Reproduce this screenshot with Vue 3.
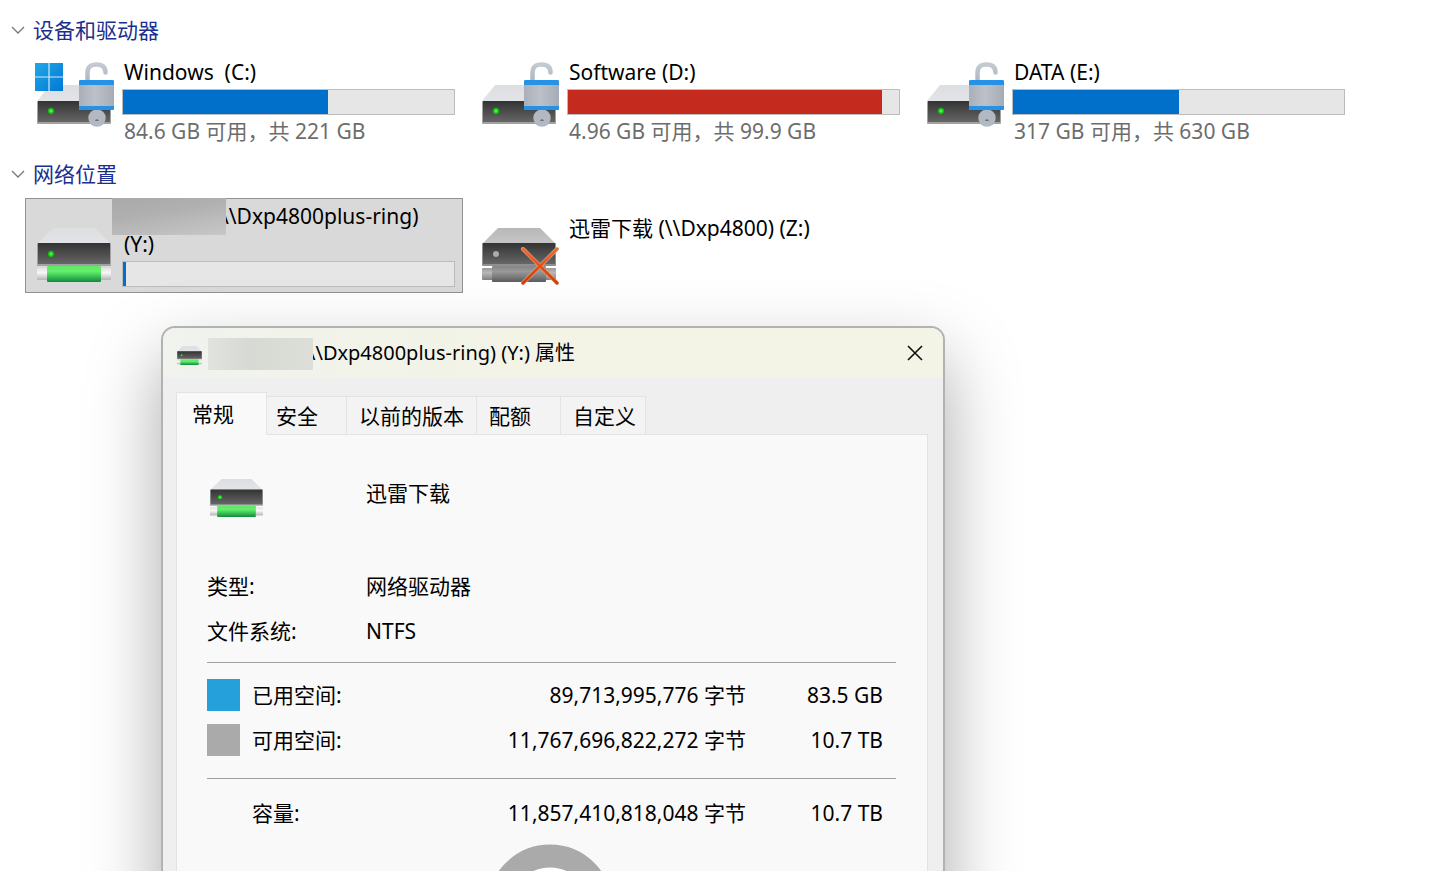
<template>
  <main class="explorer">
    <svg class="defs" width="0" height="0" aria-hidden="true">
      <defs>
        <linearGradient id="face" x1="0" y1="0" x2="0" y2="1">
          <stop offset="0" stop-color="#333" />
          <stop offset="1" stop-color="#666" />
        </linearGradient>
        <linearGradient id="lid" x1="0" y1="0" x2="0" y2="1">
          <stop offset="0" stop-color="#dcdee0" />
          <stop offset="1" stop-color="#e3e4e9" />
        </linearGradient>
        <linearGradient id="lidOff" x1="0" y1="0" x2="0" y2="1">
          <stop offset="0" stop-color="#b8b8b8" />
          <stop offset="1" stop-color="#c6c6c6" />
        </linearGradient>
        <linearGradient id="cable" x1="0" y1="0" x2="0" y2="1">
          <stop offset="0" stop-color="#5fe866" />
          <stop offset="0.35" stop-color="#62ee6c" />
          <stop offset="1" stop-color="#0f8a3c" />
        </linearGradient>
        <linearGradient id="plug" x1="0" y1="0" x2="0" y2="1">
          <stop offset="0" stop-color="#e2e2e2" />
          <stop offset="0.4" stop-color="#f8f8f8" />
          <stop offset="1" stop-color="#b4b4b4" />
        </linearGradient>
        <linearGradient id="cableOff" x1="0" y1="0" x2="0" y2="1">
          <stop offset="0" stop-color="#858585" />
          <stop offset="0.35" stop-color="#999" />
          <stop offset="1" stop-color="#5c5c5c" />
        </linearGradient>
        <linearGradient id="plugOff" x1="0" y1="0" x2="0" y2="1">
          <stop offset="0" stop-color="#999" />
          <stop offset="0.4" stop-color="#b8b8b8" />
          <stop offset="1" stop-color="#808080" />
        </linearGradient>
        <linearGradient id="win" x1="0" y1="0" x2="1" y2="1">
          <stop offset="0" stop-color="#22a7e8" />
          <stop offset="1" stop-color="#0078d4" />
        </linearGradient>
        <linearGradient id="steel" x1="0" y1="0" x2="1" y2="0">
          <stop offset="0" stop-color="#a9afb8" />
          <stop offset="0.45" stop-color="#bcc1c9" />
          <stop offset="1" stop-color="#a6acb5" />
        </linearGradient>
        <linearGradient id="shackle" x1="0" y1="0" x2="0" y2="1">
          <stop offset="0" stop-color="#c4cad2" />
          <stop offset="1" stop-color="#b0b6bf" />
        </linearGradient>
        <linearGradient id="cross" gradientUnits="userSpaceOnUse" x1="0" y1="47" x2="0" y2="81">
          <stop offset="0" stop-color="#f0682c" />
          <stop offset="1" stop-color="#d43c04" />
        </linearGradient>
        <radialGradient id="led">
          <stop offset="0" stop-color="#7dff7d" />
          <stop offset="0.5" stop-color="#1fdd1f" />
          <stop offset="1" stop-color="#15a015" />
        </radialGradient>
        <symbol id="net-drive" viewBox="0 0 74 54" preserveAspectRatio="none">
          <path d="M16 0H58L74 16H0Z" fill="url(#lid)" />
          <rect x="0" y="15" width="74" height="23" rx="1" fill="#a2a2a2" />
          <rect x="1" y="15" width="72" height="21" fill="url(#face)" />
          <circle cx="14" cy="26" r="3.2" fill="url(#led)" />
          <rect x="0" y="40" width="74" height="12" rx="1" fill="url(#plug)" />
          <rect x="10" y="38" width="54" height="16" rx="1" fill="url(#cable)" />
        </symbol>
      </defs>
    </svg>

    <section class="group">
      <h2 class="group-title">
        <button type="button" aria-label="折叠设备和驱动器">
          <svg width="14" height="9" viewBox="0 0 14 9"><path d="M1 1L7 7L13 1" /></svg>
        </button>
        设备和驱动器
      </h2>
      <div class="items">
        <div v-for="d in drives" :key="d.name" class="item">
          <svg class="icon" width="90" height="72" viewBox="0 0 90 72">
            <path d="M18 27H66L79 43H5Z" fill="url(#lid)" />
            <rect x="5" y="43" width="74" height="23" rx="1" fill="#a2a2a2" />
            <rect x="6" y="43" width="72" height="21" fill="url(#face)" />
            <circle cx="19" cy="53" r="3.2" fill="url(#led)" />
            <g v-if="d.system">
              <rect x="3" y="5" width="28" height="28" fill="#cfeafa" />
              <path d="M3 5H16.400V18.400H3ZM17.600 5H31V18.400H17.600ZM3 19.600H16.400V33H3ZM17.600 19.600H31V33H17.600Z" fill="url(#win)" />
            </g>
            <path d="M55.500 23V15C55.500 8 59 6.500 64.500 6.500C70 6.500 73.500 9 73.500 14.500" fill="none" stroke="url(#shackle)" stroke-width="4.500" stroke-linecap="round" />
            <circle cx="65" cy="60" r="8.700" fill="#b3b9c2" />
            <path d="M63 63C63.500 60.800 66.500 60.800 67 63Z" fill="#6d737c" />
            <rect x="47" y="22" width="35" height="30" rx="1" fill="url(#steel)" />
            <path d="M47 27V23.500Q47 22 48.500 22H80.500Q82 22 82 23.500V27ZM47 48H82V50.500Q82 52 80.500 52H48.500Q47 52 47 50.500Z" fill="#2492e6" />
          </svg>
          <div class="info">
            <div class="name">{{ d.name }}</div>
            <div class="bar" role="progressbar" :aria-valuenow="d.used" aria-valuemin="0" aria-valuemax="100">
              <div class="fill" :class="{ low: d.low }" :style="{ width: d.used + '%' }"></div>
            </div>
            <div class="space">{{ d.space }}</div>
          </div>
        </div>
      </div>
    </section>

    <section class="group">
      <h2 class="group-title">
        <button type="button" aria-label="折叠网络位置">
          <svg width="14" height="9" viewBox="0 0 14 9"><path d="M1 1L7 7L13 1" /></svg>
        </button>
        网络位置
      </h2>
      <div class="items">
        <div class="item selected">
          <svg class="icon" width="90" height="82" viewBox="0 0 90 82">
            <use href="#net-drive" x="5" y="26" width="74" height="54" />
          </svg>
          <div class="info">
            <div class="name"><span class="mask"></span>\\Dxp4800plus-ring)<br />(Y:)</div>
            <div class="bar" role="progressbar" aria-valuenow="1" aria-valuemin="0" aria-valuemax="100">
              <div class="fill" :style="{ width: '1%' }"></div>
            </div>
          </div>
        </div>
        <div class="item offline">
          <svg class="icon" width="90" height="84" viewBox="0 0 90 84">
            <path d="M21 26H63L79 42H5Z" fill="url(#lidOff)" />
            <rect x="5" y="41" width="74" height="23" rx="1" fill="#8f8f8f" />
            <rect x="6" y="41" width="72" height="21" fill="url(#face)" />
            <circle cx="19" cy="52" r="3" fill="#aaa" />
            <rect x="5" y="66" width="74" height="12" rx="1" fill="url(#plugOff)" />
            <rect x="15" y="64" width="54" height="16" rx="1" fill="url(#cableOff)" />
            <path d="M46 47L80 81M80 47L46 81" stroke="#d8b8a4" stroke-width="4" stroke-linecap="round" />
            <path d="M46 47L80 81M80 47L46 81" stroke="url(#cross)" stroke-width="3" stroke-linecap="round" />
          </svg>
          <div class="info">
            <div class="name">迅雷下载 (\\Dxp4800) (Z:)</div>
          </div>
        </div>
      </div>
    </section>

    <div class="dialog" role="dialog" aria-labelledby="dialog-title">
      <header class="titlebar">
        <svg class="title-icon" width="25" height="19"><use href="#net-drive" width="25" height="19" /></svg>
        <div id="dialog-title" class="title"><span class="mask"></span>\\Dxp4800plus-ring) (Y:) 属性</div>
        <button type="button" class="close" aria-label="关闭">
          <svg width="16" height="16" viewBox="0 0 16 16"><path d="M1 1L15 15M15 1L1 15" /></svg>
        </button>
      </header>

      <div class="body">
        <div class="tabs" role="tablist">
          <button
            v-for="t in tabs"
            :key="t.label"
            type="button"
            role="tab"
            class="tab"
            :class="{ active: t.label === current }"
            :aria-selected="t.label === current"
            :style="{ width: t.width + 'px' }"
            @click="current = t.label"
          >{{ t.label }}</button>
        </div>

        <div class="panel" role="tabpanel">
          <div class="head">
            <svg width="53" height="38"><use href="#net-drive" width="53" height="38" /></svg>
            <span>迅雷下载</span>
          </div>
          <dl class="props">
            <dt>类型:</dt>
            <dd>网络驱动器</dd>
            <dt>文件系统:</dt>
            <dd>NTFS</dd>
          </dl>
          <table class="usage">
            <tbody>
              <tr v-for="r in usage" :key="r.label" :class="r.kind">
                <td class="key"><span v-if="r.kind !== 'total'" class="swatch"></span></td>
                <th scope="row">{{ r.label }}</th>
                <td class="bytes">{{ r.bytes }} 字节</td>
                <td class="size">{{ r.size }}</td>
              </tr>
            </tbody>
          </table>
          <svg class="chart" width="126" height="126" viewBox="0 0 126 126">
            <circle cx="63" cy="63" r="51" fill="#fff" stroke="#aaa" stroke-width="23" />
          </svg>
        </div>
      </div>
    </div>
  </main>
</template>

<script setup>
import { ref } from 'vue'

const drives = [
  { name: 'Windows\u00a0 (C:)', used: 62, space: '84.6 GB 可用，共 221 GB', system: true },
  { name: 'Software (D:)', used: 95, space: '4.96 GB 可用，共 99.9 GB', low: true },
  { name: 'DATA (E:)', used: 50, space: '317 GB 可用，共 630 GB' },
]

const tabs = [
  { label: '常规', width: 91 },
  { label: '安全', width: 80 },
  { label: '以前的版本', width: 130 },
  { label: '配额', width: 84 },
  { label: '自定义', width: 85 },
]
const current = ref('常规')

const usage = [
  { kind: 'used', label: '已用空间:', bytes: '89,713,995,776', size: '83.5 GB' },
  { kind: 'free', label: '可用空间:', bytes: '11,767,696,822,272', size: '10.7 TB' },
  { kind: 'total', label: '容量:', bytes: '11,857,410,818,048', size: '10.7 TB' },
]
</script>

<style>
body { background: #fff; }
</style>

<style scoped>
* { box-sizing: border-box; }
.explorer { position: relative; height: 100vh; overflow: hidden; padding: 16px 0 0 11px; font-family: "Noto Sans", "Noto Sans CJK SC", sans-serif; font-size: 21px; line-height: 28px; color: #000; }
.defs { position: absolute; }
button { font: inherit; color: inherit; border: 0; padding: 0; background: none; }

.group { margin-bottom: 11px; }
.group-title { display: flex; align-items: center; gap: 8px; margin: 0 0 10px; font-size: 21px; font-weight: 400; color: #1a2f8f; }
.group-title button { display: flex; }
.group-title path { fill: none; stroke: #777; stroke-width: 1.3; }
.items { display: grid; grid-template-columns: repeat(auto-fill, 438px); gap: 7px; margin-left: 14px; }
.item { display: flex; align-items: flex-start; padding: 3px 7px 3px 6px; border: 1px solid transparent; }
.item.selected { background: #d9d9d9; border-color: #919191; }
.icon { flex: none; }
.info { flex: 1; min-width: 0; }
.name { padding-left: 2px; margin-bottom: 3px; }
.offline .name { padding-top: 12px; }
.bar { height: 26px; border: 1px solid #bcbcbc; background: #e6e6e6; margin-bottom: 2px; }
.fill { height: 100%; background: #0070cb; }
.fill.low { background: #c42b1e; }
.space { padding-left: 2px; color: #6d6d6d; }
.mask { display: inline-block; vertical-align: top; position: relative; }
.name .mask { width: 114px; height: 37px; margin: -4px -5px -9px -12px; background: linear-gradient(170deg, #a9a9a9, #b0b0b0 40%, #c8c8c8); }

.dialog { position: absolute; left: 161px; top: 326px; width: 784px; border: 2px solid #b2b2b2; border-radius: 14px; background: #efefef; box-shadow: 0 32px 72px rgba(0, 0, 0, 0.34); }
.titlebar { display: flex; align-items: center; height: 50px; padding: 0 20px 0 14px; border-radius: 12px 12px 0 0; background: linear-gradient(90deg, #f0f3ee, #f3f3e6 45%, #f3f3e6); }
.title-icon { flex: none; margin-top: 4px; }
.title { flex: 1; padding-left: 6px; font-size: 20px; white-space: nowrap; }
.title .mask { width: 105px; height: 32px; margin: -1px -5px -3px 0; background: linear-gradient(90deg, #e0e3de, #d7dad4 40%, #dcded7); }
.close { display: flex; }
.close path { stroke: #111; stroke-width: 1.6; }

.body { padding: 14px 15px 14px 13px; }
.tabs { position: relative; display: flex; align-items: flex-end; height: 43px; }
.tab { height: 39px; padding-left: 12px; text-align: left; background: #f3f3f3; border: 1px solid #e3e3e3; border-left: 0; white-space: nowrap; }
.tab.active { height: 43px; padding-left: 15px; background: #f9f9f9; border-left: 1px solid #e3e3e3; border-bottom-color: #f9f9f9; }
.tab:nth-child(2) { padding-left: 9px; }
.panel { margin-top: -1px; padding: 44px 31px 30px 30px; background: #f9f9f9; border: 1px solid #e3e3e3; }
.head { display: grid; grid-template-columns: 156px 1fr; height: 84px; padding-left: 3px; }
.props { display: grid; grid-template-columns: 159px 1fr; grid-auto-rows: 45px; align-items: center; margin: 0 0 9px; }
.props dd { margin: 0; }
.usage { width: 100%; table-layout: fixed; border-collapse: collapse; }
.usage td, .usage th { height: 45px; padding: 0; font-weight: 400; text-align: left; vertical-align: middle; }
.usage .key { width: 45px; }
.usage th { width: 120px; }
.usage .bytes { text-align: right; }
.usage .size { width: 150px; padding-right: 13px; text-align: right; }
.usage .used, .usage .total { border-top: 1px solid #a0a0a0; }
.usage .used td, .usage .used th { height: 55px; padding-top: 10px; }
.usage .free td, .usage .free th { height: 61px; padding-bottom: 16px; }
.usage .total td, .usage .total th { height: 57px; padding-top: 12px; }
.swatch { display: block; width: 33px; height: 32px; background: #26a0da; }
.free .swatch { background: #aaa; }
.chart { display: block; margin: 8px 0 0 280px; }
</style>
